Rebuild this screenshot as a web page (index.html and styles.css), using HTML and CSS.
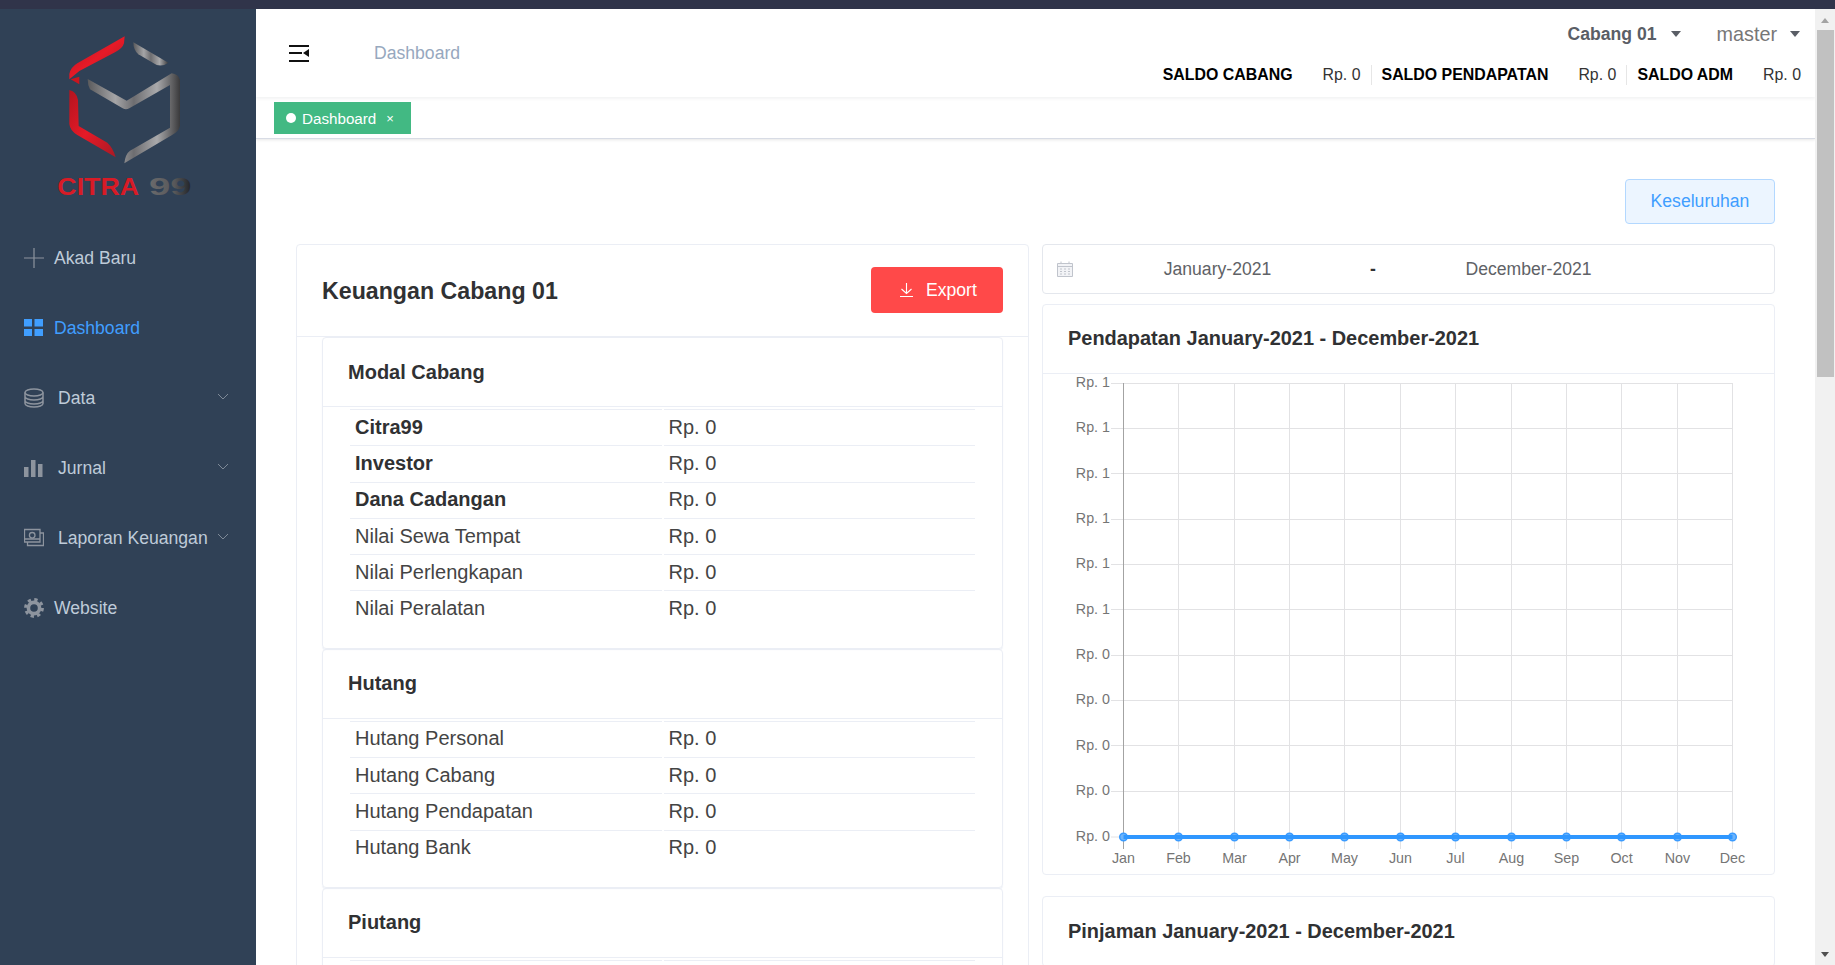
FILE: index.html
```html
<!DOCTYPE html>
<html lang="en">
<head>
<meta charset="utf-8">
<title>Dashboard</title>
<link rel="stylesheet" href="styles.css">
</head>
<body>
<div class="topstrip"></div>
<div class="app">
  <aside class="sidebar">
    <div class="logo">
      <svg class="logo-svg" viewBox="0 27 768 642" width="256" height="214">
        <defs>
          <linearGradient id="red" x1="0" y1="0" x2="1" y2="1">
            <stop offset="0" stop-color="#b3141f"/><stop offset=".5" stop-color="#e71a27"/><stop offset="1" stop-color="#a81a25"/>
          </linearGradient>
          <linearGradient id="gray" x1="0" y1="0" x2="1" y2="0">
            <stop offset="0" stop-color="#5a5a5c"/><stop offset=".3" stop-color="#a5a5a7"/><stop offset=".5" stop-color="#6d6d70"/><stop offset=".75" stop-color="#a9a9ab"/><stop offset="1" stop-color="#3a3a3c"/>
          </linearGradient>
          <linearGradient id="graytext" x1="0" y1="0" x2="1" y2="0">
            <stop offset="0" stop-color="#6a6a6c"/><stop offset=".6" stop-color="#58585a"/><stop offset="1" stop-color="#1f2226"/>
          </linearGradient>
        </defs>
        <path fill="url(#red)" d="M374 109 L372 130 Q368 145 345 157 L238 213 L208 238 L208 222 Q212 202 232 190 Z"/>
        <path fill="#c9161f" d="M212 238 L238 230 L238 253 Z"/>
        <path fill="url(#red)" d="M208 270 Q230 275 234 300 L236 378 L322 428 Q340 445 347 472 L232 405 Q210 392 208 372 Z"/>
        <path fill="url(#gray)" d="M400 127 L505 188 Q490 200 470 195 L415 163 Q400 150 400 127 Z"/>
        <path fill="url(#gray)" d="M263 237 L380 302 L515 220 Q535 222 540 240 L540 378 Q536 395 515 406 L373 490 Q376 462 390 452 L510 383 L510 255 L388 325 Q378 331 368 325 L270 268 Q263 255 263 237 Z"/>
        <text class="logo-word" x="172" y="585" fill="#d81b26" textLength="245" lengthAdjust="spacingAndGlyphs">CITRA</text>
        <text class="logo-word" x="447" y="585" fill="url(#graytext)" textLength="128" lengthAdjust="spacingAndGlyphs">99</text>
      </svg>
    </div>
    <nav class="menu">
      <a class="menu-item">
        <svg class="mi-icon" viewBox="0 0 20 20"><path d="M10 0V20M0 10H20" stroke="#8d949e" stroke-width="1.2" fill="none"/></svg>
        <span>Akad Baru</span>
      </a>
      <a class="menu-item active">
        <svg class="mi-icon" viewBox="0 0 20 20"><path fill="#409eff" d="M0 1H8V8.500H0ZM10.500 1H19V8.500H10.500ZM0 11H8V18H0ZM10.500 11H19V18H10.500Z"/></svg>
        <span>Dashboard</span>
      </a>
      <a class="menu-item sub">
        <svg class="mi-icon" viewBox="0 0 20 20" fill="none" stroke="#8d949e" stroke-width="1.500"><ellipse cx="10" cy="4.500" rx="9" ry="3.500"/><path d="M1 4.500V15.500C1 17.500 5 19 10 19S19 17.500 19 15.500V4.500M1 8.500C1 10.500 5 12 10 12S19 10.500 19 8.500M1 12.500C1 14.500 5 16 10 16S19 14.500 19 12.500"/></svg>
        <span>Data</span>
        <svg class="chev" viewBox="0 0 12 7"><path d="M1 1L6 6L11 1" fill="none" stroke="#7f8a98" stroke-width="1"/></svg>
      </a>
      <a class="menu-item sub">
        <svg class="mi-icon" viewBox="0 0 20 20"><path fill="#8d949e" d="M0 9H4.500V19H0ZM7 2H11.500V19H7ZM14 6H18.500V19H14Z"/></svg>
        <span>Jurnal</span>
        <svg class="chev" viewBox="0 0 12 7"><path d="M1 1L6 6L11 1" fill="none" stroke="#7f8a98" stroke-width="1"/></svg>
      </a>
      <a class="menu-item sub">
        <svg class="mi-icon" viewBox="0 0 20 20" fill="none" stroke="#8d949e" stroke-width="1.300"><path d="M0.500 1.500H16V14H0.500Z"/><circle cx="8.200" cy="7.300" r="2.800"/><path d="M0.500 11H16M3.500 14V17.500H19.500V5H16"/></svg>
        <span>Laporan Keuangan</span>
        <svg class="chev" viewBox="0 0 12 7"><path d="M1 1L6 6L11 1" fill="none" stroke="#7f8a98" stroke-width="1"/></svg>
      </a>
      <a class="menu-item">
        <svg class="mi-icon" viewBox="0 0 20 20" fill="none" stroke="#8d949e"><circle cx="10" cy="10" r="5.600" stroke-width="3.600"/><circle cx="10" cy="10" r="8.400" stroke-width="3" stroke-dasharray="3.300 3.300"/></svg>
        <span>Website</span>
      </a>
    </nav>
  </aside>

  <main class="main">
    <header class="header">
      <div class="header-left">
        <svg class="hamburger" viewBox="0 0 20 17"><path fill="#111" d="M0 0H20V2H0ZM0 7H13V9H0ZM0 15H20V17H0ZM20 4V12L14 8Z"/></svg>
        <span class="crumb">Dashboard</span>
      </div>
      <div class="header-right">
        <div class="drop-row">
          <span class="drop-branch">Cabang 01<i class="caret"></i></span>
          <span class="drop-user">master<i class="caret"></i></span>
        </div>
        <div class="saldo-row">
          <div class="saldo"><b>SALDO CABANG</b><span>Rp. 0</span></div>
          <div class="saldo"><b>SALDO PENDAPATAN</b><span>Rp. 0</span></div>
          <div class="saldo"><b>SALDO ADM</b><span>Rp. 0</span></div>
        </div>
      </div>
    </header>
    <div class="tagbar">
      <span class="tag"><i class="tag-dot"></i>Dashboard<em class="tag-x">×</em></span>
    </div>

    <div class="content">
      <div class="toolbar"><button class="btn-plain">Keseluruhan</button></div>
      <div class="columns">
        <section class="card">
          <div class="card-head">
            <h2 class="title-lg">Keuangan Cabang 01</h2>
            <button class="btn-export">
              <svg class="dl" viewBox="0 0 13 14"><path d="M6.500 0V10.500M1.500 6L6.500 10.500L11.500 6M0 13.500H13" fill="none" stroke="#fff" stroke-width="1.100"/></svg>
              Export
            </button>
          </div>
          <div class="card-list">
            <div class="subcard">
              <h3 class="subcard-head">Modal Cabang</h3>
              <div class="subcard-body">
                <table class="fin">
                  <tr><th>Citra99</th><td>Rp. 0</td></tr>
                  <tr><th>Investor</th><td>Rp. 0</td></tr>
                  <tr><th>Dana Cadangan</th><td>Rp. 0</td></tr>
                  <tr><td>Nilai Sewa Tempat</td><td>Rp. 0</td></tr>
                  <tr><td>Nilai Perlengkapan</td><td>Rp. 0</td></tr>
                  <tr><td>Nilai Peralatan</td><td>Rp. 0</td></tr>
                </table>
              </div>
            </div>
            <div class="subcard">
              <h3 class="subcard-head">Hutang</h3>
              <div class="subcard-body">
                <table class="fin">
                  <tr><td>Hutang Personal</td><td>Rp. 0</td></tr>
                  <tr><td>Hutang Cabang</td><td>Rp. 0</td></tr>
                  <tr><td>Hutang Pendapatan</td><td>Rp. 0</td></tr>
                  <tr><td>Hutang Bank</td><td>Rp. 0</td></tr>
                </table>
              </div>
            </div>
            <div class="subcard">
              <h3 class="subcard-head">Piutang</h3>
              <div class="subcard-body">
                <table class="fin">
                  <tr><td>&nbsp;</td><td>&nbsp;</td></tr>
                </table>
              </div>
            </div>
          </div>
        </section>

        <div class="right-col">
          <div class="date-range">
            <svg class="cal" viewBox="0 0 16 16" fill="none" stroke="#c0c4cc"><path d="M0.500 2.500H15.500V15.500H0.500Z" fill="#f2f3f6"/><path d="M0.500 5.500H15.500M4 0.500V3M12 0.500V3"/><path d="M3 8H5M7 8H9M11 8H13M3 10.500H5M7 10.500H9M11 10.500H13M3 13H5M7 13H9M11 13H13" stroke-width="1"/></svg>
            <span class="date-input">January-2021</span>
            <span class="date-sep">-</span>
            <span class="date-input">December-2021</span>
          </div>
          <section class="card chart-card">
            <h3 class="chart-head">Pendapatan January-2021 - December-2021</h3>
            <svg class="chart" viewBox="1043 374 731 500" width="731" height="500">
              <g class="grid">
                <path d="M1111 383.500H1732.500M1111 428.500H1732.500M1111 473.500H1732.500M1111 519.500H1732.500M1111 564.500H1732.500M1111 609.500H1732.500M1111 655.500H1732.500M1111 700.500H1732.500M1111 745.500H1732.500M1111 791.500H1732.500M1111 837H1732.500"/>
                <path d="M1178.500 383V849M1234.500 383V849M1289.500 383V849M1344.500 383V849M1400.500 383V849M1455.500 383V849M1511.500 383V849M1566.500 383V849M1621.500 383V849M1677.500 383V849M1732.500 383V849"/>
              </g>
              <path class="axis" d="M1123.500 383V849"/>
              <g class="y-labels">
                <text x="1110" y="387">Rp. 1</text>
                <text x="1110" y="432">Rp. 1</text>
                <text x="1110" y="478">Rp. 1</text>
                <text x="1110" y="523">Rp. 1</text>
                <text x="1110" y="568">Rp. 1</text>
                <text x="1110" y="614">Rp. 1</text>
                <text x="1110" y="659">Rp. 0</text>
                <text x="1110" y="704">Rp. 0</text>
                <text x="1110" y="750">Rp. 0</text>
                <text x="1110" y="795">Rp. 0</text>
                <text x="1110" y="841">Rp. 0</text>
              </g>
              <g class="x-labels">
                <text x="1123.500" y="863">Jan</text>
                <text x="1178.500" y="863">Feb</text>
                <text x="1234.500" y="863">Mar</text>
                <text x="1289.500" y="863">Apr</text>
                <text x="1344.500" y="863">May</text>
                <text x="1400.500" y="863">Jun</text>
                <text x="1455.500" y="863">Jul</text>
                <text x="1511.500" y="863">Aug</text>
                <text x="1566.500" y="863">Sep</text>
                <text x="1621.500" y="863">Oct</text>
                <text x="1677.500" y="863">Nov</text>
                <text x="1732.500" y="863">Dec</text>
              </g>
              <g class="points">
                <circle cx="1123.500" cy="837" r="3.800"/><circle cx="1178.500" cy="837" r="3.800"/><circle cx="1234.500" cy="837" r="3.800"/><circle cx="1289.500" cy="837" r="3.800"/><circle cx="1344.500" cy="837" r="3.800"/><circle cx="1400.500" cy="837" r="3.800"/><circle cx="1455.500" cy="837" r="3.800"/><circle cx="1511.500" cy="837" r="3.800"/><circle cx="1566.500" cy="837" r="3.800"/><circle cx="1621.500" cy="837" r="3.800"/><circle cx="1677.500" cy="837" r="3.800"/><circle cx="1732.500" cy="837" r="3.800"/>
              </g>
              <path class="line" d="M1123.500 837H1732.500"/>
            </svg>
          </section>
          <section class="card chart-card chart-next">
            <h3 class="chart-head">Pinjaman January-2021 - December-2021</h3>
          </section>
        </div>
      </div>
    </div>
  </main>

  <div class="scrollbar">
    <i class="sb-up"></i>
    <i class="sb-thumb"></i>
    <i class="sb-down"></i>
  </div>
</div>
</body>
</html>
```

FILE: styles.css
```css
* { box-sizing: border-box; }
html, body { margin: 0; height: 100%; overflow: hidden; }
body { font-family: "Liberation Sans", Arial, sans-serif; color: #303133; background: #fff; }

.topstrip { height: 9px; background: #30344a; }
.app { display: flex; height: 956px; overflow: hidden; }

/* Sidebar */
.sidebar { width: 256px; flex: none; background: #304156; }
.logo { height: 214px; }
.logo-svg { display: block; }
.logo-word { font-family: "Liberation Sans", sans-serif; font-weight: 700; font-size: 69px; }
.menu { display: flex; flex-direction: column; }
.menu-item { height: 70px; display: flex; align-items: center; padding-left: 24px; font-size: 17.6px; color: #bfcbd9; position: relative; }
.menu-item.active { color: #409eff; }
.mi-icon { width: 20px; height: 20px; flex: none; margin-right: 10px; }
.menu-item.sub .mi-icon { margin-right: 14px; }
.chev { width: 12px; height: 7px; position: absolute; right: 27px; top: 30px; }

/* Main */
.main { flex: 1; min-width: 0; display: flex; flex-direction: column; height: 956px; overflow: hidden; }
.header { height: 88px; flex: none; display: flex; justify-content: space-between; position: relative; z-index: 2; box-shadow: 0 1px 4px rgba(0, 21, 41, .08); background: #fff; }
.header-left { display: flex; align-items: center; padding-left: 33px; }
.hamburger { width: 20px; height: 17px; flex: none; margin-right: 65px; }
.crumb { font-size: 17.6px; color: #97a8be; }
.header-right { padding: 12px 14px 0 0; display: flex; flex-direction: column; align-items: flex-end; }
.drop-row { display: flex; height: 26px; align-items: center; }
.drop-branch { font-size: 17.6px; font-weight: 700; color: #5a5e66; margin-right: 36px; display: flex; align-items: center; }
.drop-user { font-size: 19.8px; color: #777; display: flex; align-items: center; }
.caret { width: 0; height: 0; border: 5px solid transparent; border-top: 6px solid #5a5e66; border-bottom: 0; margin-left: 14px; }
.drop-user .caret { margin-left: 13px; margin-right: 1px; }
.saldo-row { display: flex; margin-top: 18px; }
.saldo { display: flex; align-items: center; height: 20px; font-size: 15.9px; color: #333; padding: 0 10px; border-left: 1px solid #e6e6e6; }
.saldo:first-child { border-left: 0; }
.saldo:last-child { padding-right: 0; }
.saldo b { color: #000; margin-right: 30px; }

.tagbar { height: 42px; flex: none; padding: 5px 0 0 18px; border-bottom: 1px solid #d8dce5; box-shadow: 0 1px 3px rgba(0, 0, 0, .1); background: #fff; position: relative; z-index: 1; }
.tag { display: inline-flex; align-items: center; height: 32px; width: 137px; padding-left: 12px; background: #42b983; color: #fff; font-size: 15.2px; }
.tag-dot { width: 10px; height: 10px; border-radius: 50%; background: #fff; margin-right: 6px; flex: none; }
.tag-x { font-style: normal; font-size: 13px; margin-left: 10px; }

.content { padding: 40px 40px 0; flex: 1; }
.toolbar { display: flex; justify-content: flex-end; margin-bottom: 20px; }
.btn-plain { width: 150px; height: 45px; background: #ecf5ff; border: 1px solid #b3d8ff; border-radius: 4px; color: #409eff; font: 17.6px "Liberation Sans", Arial, sans-serif; }
.columns { display: grid; grid-template-columns: 733px 733px; column-gap: 13px; align-items: start; }

.card { border: 1px solid #ebeef5; border-radius: 4px; background: #fff; }
.card-head { height: 92px; display: flex; align-items: center; justify-content: space-between; padding: 0 25px 2px; border-bottom: 1px solid #ebeef5; }
.title-lg { margin: 3px 0 0; font-size: 23.2px; font-weight: 700; color: #303133; }
.btn-export { width: 132px; height: 46px; border: 0; border-radius: 4px; background: #ff4949; color: #fff; font: 17.6px "Liberation Sans", Arial, sans-serif; display: flex; align-items: center; padding: 1px 0 0 29px; }
.dl { width: 13px; height: 14px; margin-right: 13px; flex: none; }

.card-list { padding: 0 25px; }
.subcard { border: 1px solid #ebeef5; border-radius: 4px; box-shadow: 0 1px 1px rgba(220, 226, 240, .6); margin-bottom: 0; }
.subcard-head { margin: 0; height: 69px; padding: 0 25px; display: flex; align-items: center; font-size: 20px; font-weight: 700; color: #303133; border-bottom: 1px solid #ebeef5; }
.subcard-body { padding: 2px 25px 21px; }
.fin { width: 100%; border-collapse: separate; border-spacing: 2px 0; font-size: 20px; color: #444; table-layout: fixed; }
.fin th, .fin td { height: 36.300px; padding: 0 5px 1px; border-top: 1px solid #ebeef5; text-align: left; font-weight: 400; }
.fin th { font-weight: 700; color: #303133; }

.right-col { display: flex; flex-direction: column; }
.date-range { height: 50px; border: 1px solid #e4e7ed; border-radius: 4px; display: flex; align-items: center; padding-left: 14px; font-size: 17.6px; color: #606266; margin-bottom: 10px; }
.cal { width: 16px; height: 16px; flex: none; margin-right: 7px; }
.date-input { width: 275px; text-align: center; }
.date-sep { width: 36px; text-align: center; color: #303133; font-weight: 700; }

.chart-head { margin: 0; height: 69px; padding: 0 25px 1px; display: flex; align-items: center; font-size: 19.95px; font-weight: 700; color: #303133; border-bottom: 1px solid #ebeef5; }
.chart { display: block; }
.chart-next { margin-top: 21px; }
.chart-next .chart-head { padding-bottom: 0; }
.grid path { stroke: #e2e2e4; stroke-width: 1; fill: none; }
.axis { stroke: #a3a3a3; stroke-width: 1; fill: none; }
.y-labels text { font-size: 14.300px; fill: #757575; text-anchor: end; }
.x-labels text { font-size: 14.300px; fill: #757575; text-anchor: middle; }
.points circle { fill: #6eb4fa; stroke: #3a9bff; stroke-width: 1.500; }
.line { stroke: #2f97ff; stroke-width: 4; fill: none; }

/* Window scrollbar */
.scrollbar { width: 20px; flex: none; background: #f1f1f1; position: relative; }
.sb-up, .sb-down { position: absolute; left: 6px; width: 0; height: 0; border-left: 4.500px solid transparent; border-right: 4.500px solid transparent; }
.sb-up { top: 9px; border-bottom: 5px solid #a3a3a3; }
.sb-down { bottom: 8px; border-top: 5px solid #505050; }
.sb-thumb { position: absolute; left: 2px; right: 1px; top: 21px; height: 347px; background: #c1c1c1; }
```
